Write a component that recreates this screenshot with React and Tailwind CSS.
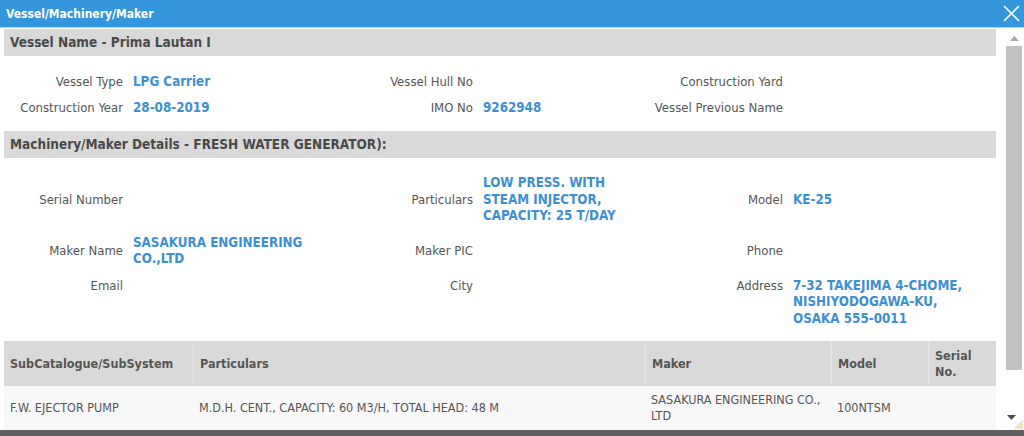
import React from 'react';

const font = { fontFamily: '"DejaVu Sans Condensed", "DejaVu Sans", sans-serif' };

const SectionHeader = ({ children }) => (
  <div className="h-[27px] bg-[#d9d9d9] flex items-center pl-[6px] text-[13.5px] font-bold text-[#4a4a4a]">
    {children}
  </div>
);

const Label = ({ children, className = '' }) => (
  <div className={`text-right text-[13px] text-[#555] leading-[16.5px] ${className}`}>{children}</div>
);

const Value = ({ children, className = '' }) => (
  <div className={`text-[13.3px] font-bold text-[#3d8fd1] leading-[16.5px] ${className}`}>{children}</div>
);

const cols = 'grid grid-cols-[119px_200px_130px_160px_130px_1fr] gap-x-[10px]';

const tableCols = [
  { title: 'SubCatalogue/SubSystem', w: 'w-[189px]' },
  { title: 'Particulars', w: 'w-[452px]' },
  { title: 'Maker', w: 'w-[186px]' },
  { title: 'Model', w: 'w-[97px]' },
  { title: 'Serial No.', w: 'flex-1' },
];

const rowData = ['F.W. EJECTOR PUMP', 'M.D.H. CENT., CAPACITY: 60 M3/H, TOTAL HEAD: 48 M', 'SASAKURA ENGINEERING CO., LTD', '100NTSM', ''];

const Scrollbar = () => (
  <div className="w-[22px] flex flex-col items-center pl-[2px] bg-white">
    <div className="h-[18px] flex items-center justify-center pt-[2px]">
      <svg width="9" height="5" viewBox="0 0 9 5"><path d="M0 5 L4.5 0 L9 5 Z" fill="#a8a8a8" /></svg>
    </div>
    <div className="w-[16px] h-[324px] bg-[#c1c1c1]" />
    <div className="flex-1" />
    <div className="h-[18px] w-full relative flex items-start">
      <svg className="ml-[3px] mt-[3px]" width="9" height="5" viewBox="0 0 9 5"><path d="M0 0 L9 0 L4.5 5 Z" fill="#505050" /></svg>
      <svg className="absolute right-0 bottom-0" width="12" height="12" viewBox="0 0 12 12">
        <path d="M11 3 L3 11 M11 6 L6 11 M11 9 L9 11" stroke="#e2cf9a" strokeWidth="1.2" />
      </svg>
    </div>
  </div>
);

export default function App() {
  return (
    <div style={font} className="w-[1024px] h-[436px] overflow-hidden flex flex-col bg-white">
      <div className="h-[28px] bg-[#3496dc] border-b border-[#a9d4f3] flex items-center justify-between pl-[6px] pr-[4px]">
        <span className="text-white font-bold text-[12px]">Vessel/Machinery/Maker</span>
        <svg width="17" height="17" viewBox="0 0 17 17">
          <path d="M1 1 L16 16 M16 1 L1 16" stroke="#ffffff" strokeWidth="1.6" />
        </svg>
      </div>
      <div className="flex-1 flex min-h-0">
        <div className="flex-1 pl-[4px] pr-[6px] pt-[1px] overflow-hidden">
          <SectionHeader>Vessel Name - Prima Lautan I</SectionHeader>
          <div className={`${cols} pt-[18px] pb-[15px] gap-y-[9px] items-center`}>
            <Label>Vessel Type</Label>
            <Value>LPG Carrier</Value>
            <Label>Vessel Hull No</Label>
            <Value></Value>
            <Label>Construction Yard</Label>
            <Value></Value>
            <Label>Construction Year</Label>
            <Value>28-08-2019</Value>
            <Label>IMO No</Label>
            <Value>9262948</Value>
            <Label>Vessel Previous Name</Label>
            <Value></Value>
          </div>
          <SectionHeader>Machinery/Maker Details - FRESH WATER GENERATOR):</SectionHeader>
          <div className={`${cols} pt-[17px] pb-[14px] gap-y-[10px]`}>
            <Label className="self-center">Serial Number</Label>
            <Value className="self-center"></Value>
            <Label className="self-center">Particulars</Label>
            <Value className="self-center">LOW PRESS. WITH STEAM INJECTOR, CAPACITY: 25 T/DAY</Value>
            <Label className="self-center">Model</Label>
            <Value className="self-center">KE-25</Value>

            <Label className="self-center">Maker Name</Label>
            <Value className="self-center">SASAKURA ENGINEERING CO.,LTD</Value>
            <Label className="self-center">Maker PIC</Label>
            <Value className="self-center"></Value>
            <Label className="self-center">Phone</Label>
            <Value className="self-center"></Value>

            <Label>Email</Label>
            <Value></Value>
            <Label>City</Label>
            <Value></Value>
            <Label>Address</Label>
            <Value className="pr-[14px]">7-32 TAKEJIMA 4-CHOME, NISHIYODOGAWA-KU, OSAKA 555-0011</Value>
          </div>
          <div className="flex h-[45px] bg-[#d9d9d9]">
            {tableCols.map((c, i) => (
              <div
                key={c.title}
                className={`${c.w} flex items-center px-[6px] text-[12.5px] font-bold text-[#555] leading-[16px] ${i > 0 ? 'border-l border-[#e6e6e6]' : ''}`}
              >
                {c.title}
              </div>
            ))}
          </div>
          <div className="flex h-[44px] bg-[#f8f8f8]">
            {tableCols.map((c, i) => (
              <div key={c.title} className={`${c.w} flex items-center px-[6px] text-[12.5px] text-[#555] leading-[16px]`}>
                {rowData[i]}
              </div>
            ))}
          </div>
        </div>
        <Scrollbar />
      </div>
      <div className="h-[6px] bg-[#5f5f5f]" />
    </div>
  );
}
